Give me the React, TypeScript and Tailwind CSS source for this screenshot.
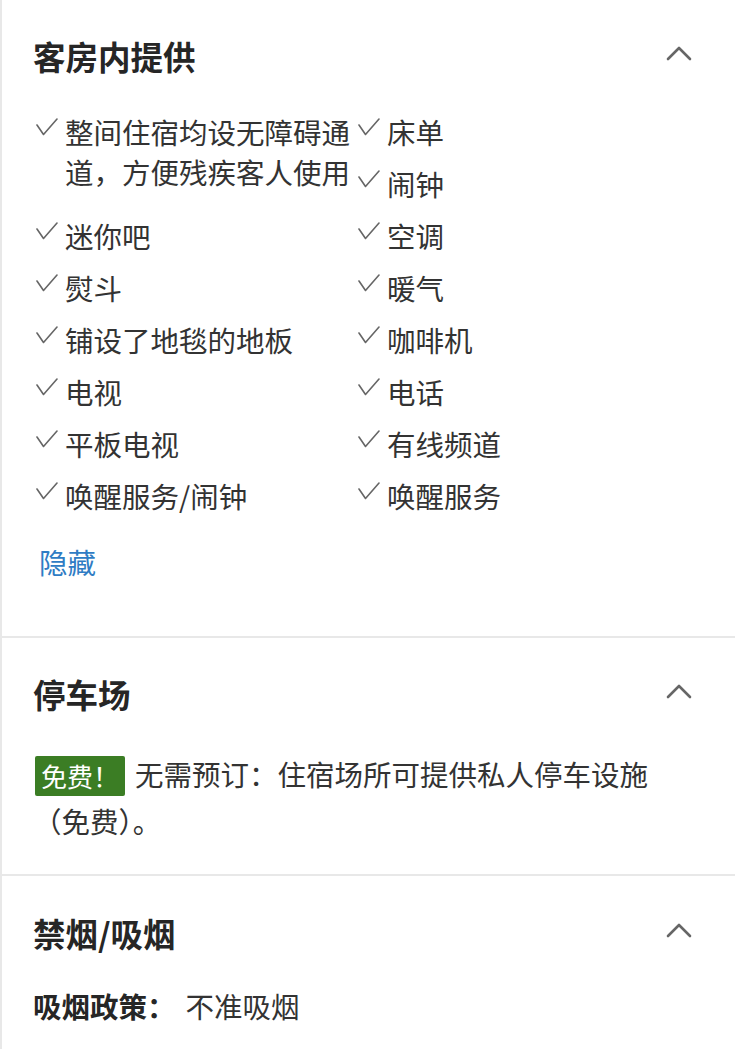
import React from 'react';

const leftItems = [
  '整间住宿均设无障碍通道，方便残疾客人使用',
  '床单',
  '闹钟',
  '迷你吧',
  '空调',
  '熨斗',
  '暖气',
  '铺设了地毯的地板',
  '咖啡机',
  '电视',
  '电话',
  '平板电视',
  '有线频道',
  '唤醒服务/闹钟',
  '唤醒服务',
];

const Check = () => (
  <svg width="22" height="18" viewBox="0 0 22 18" className="shrink-0 mt-[6px]" fill="none">
    <polyline points="1,7 7.5,16.5 21,1" stroke="#666" strokeWidth="1.6" strokeLinecap="round" strokeLinejoin="round" />
  </svg>
);

const Chevron = () => (
  <svg width="26" height="16" viewBox="0 0 26 16" fill="none" className="mt-[-6px]">
    <polyline points="2,14 13,3 24,14" stroke="#666" strokeWidth="2.6" strokeLinecap="round" strokeLinejoin="round" />
  </svg>
);

const SectionHeader = ({ title }: { title: string }) => (
  <div className="flex items-center justify-between h-10 pr-[43px]">
    <h2 className="text-[32.5px] leading-10 font-bold text-[#262626]">{title}</h2>
    <Chevron />
  </div>
);

export default function App() {
  return (
    <div
      className="min-h-[1049px] bg-white border-l-2 border-[#e8e8e8] text-[#333]"
      style={{ fontFamily: '"Noto Sans CJK SC", "Noto Sans", sans-serif' }}
    >
      {/* 客房内提供 */}
      <section className="pl-[31px] pt-9 pb-[54px]">
        <SectionHeader title="客房内提供" />
        <div className="mt-9 grid grid-cols-[322px_322px] gap-y-3 auto-rows-[40px] pl-[3px]">
          {leftItems.map((item, i) => (
            <div key={i} className={`flex gap-[7px] ${i === 0 ? 'row-span-2' : ''}`}>
              <Check />
              <span className="text-[28.5px] leading-10">{item}</span>
            </div>
          ))}
        </div>
        <button className="mt-[26px] ml-[6px] text-[28.5px] leading-10 text-[#2f7cc4]">隐藏</button>
      </section>

      {/* 停车场 */}
      <section className="border-t-2 border-[#e8e8e8] pl-[31px] pt-9 pb-[30px]">
        <SectionHeader title="停车场" />
        <div className="mt-9 pr-[60px] text-[28.5px] leading-[47px]">
          <span className="inline-block align-middle h-10 px-[6px] ml-[2px] mr-[10px] rounded-[2px] bg-[#3b7d24] text-white text-[26px] leading-10 -mt-[4px]">
            免费！
          </span>
          无需预订：住宿场所可提供私人停车设施（免费）。
        </div>
      </section>

      {/* 禁烟/吸烟 */}
      <section className="border-t-2 border-[#e8e8e8] pl-[31px] pt-[37px] pb-8">
        <SectionHeader title="禁烟/吸烟" />
        <p className="mt-[33px] text-[28.5px] leading-10">
          <span className="font-bold text-[#262626]">吸烟政策：</span>
          <span className="ml-[10px]">不准吸烟</span>
        </p>
      </section>
    </div>
  );
}
